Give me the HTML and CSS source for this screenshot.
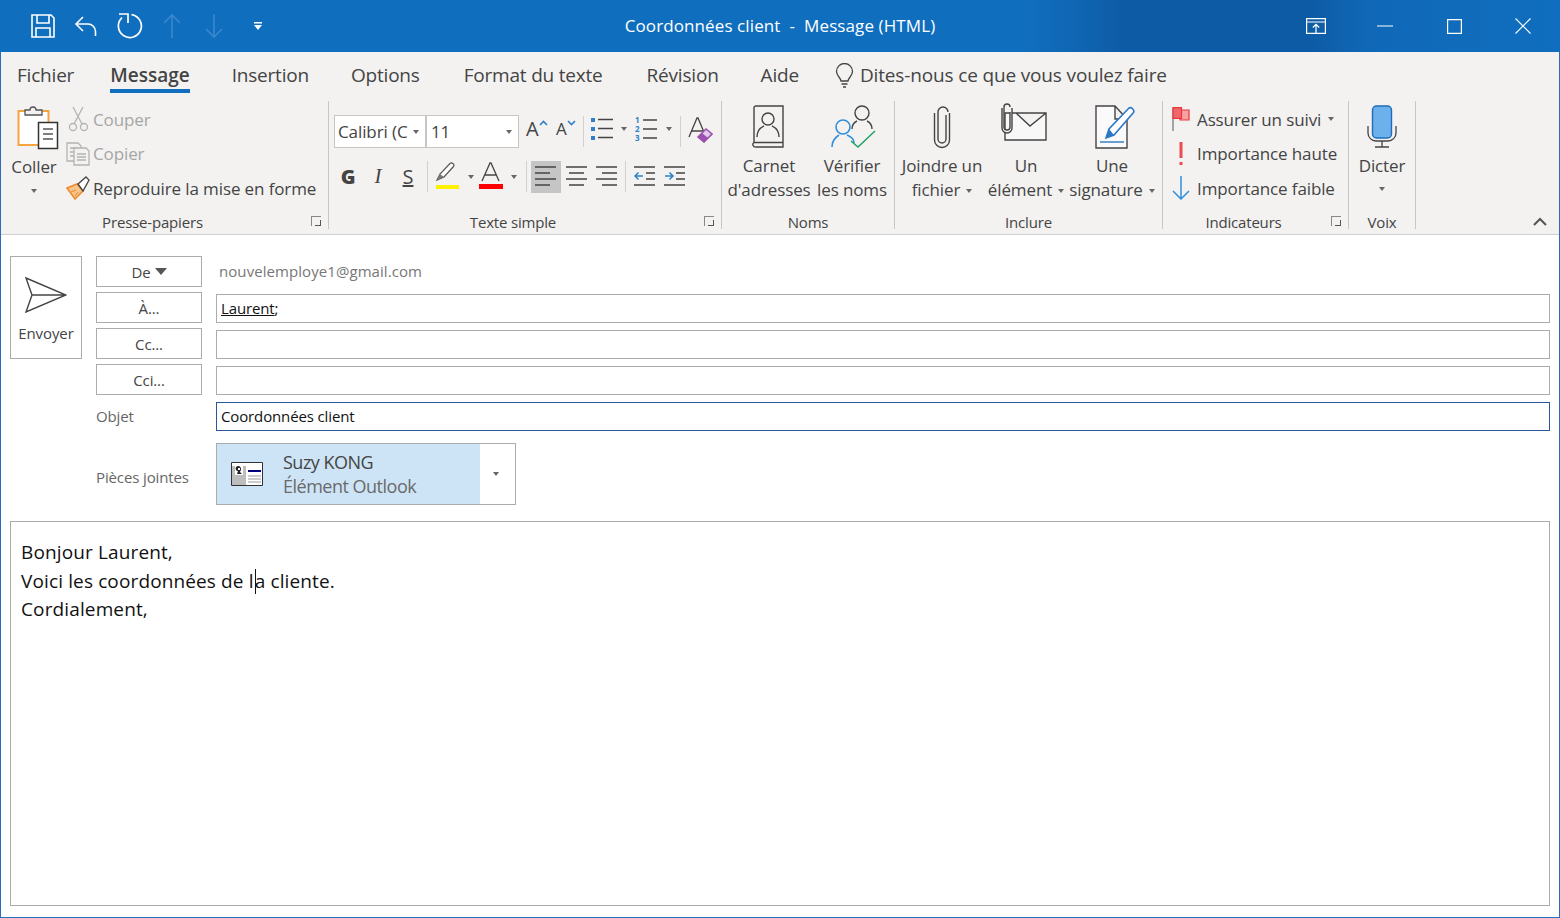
FILE: index.html
```html
<!DOCTYPE html>
<html lang="fr">
  <head>
    <meta charset="UTF-8" />
    <title>Coordonnées client - Message (HTML)</title>
    <link rel="stylesheet" href="styles.css">
  </head>
  <body>
    <div class="window">
      <header class="titlebar">
        <div class="qat">
          <svg class="qat-save" width="26" height="26" viewBox="0 0 26 26" fill="none" stroke="#fff" stroke-width="1.6"><path d="M2 2h19l3 3v19H2z"/><path d="M7 2v8h12V2M6 24v-9h14v9"/></svg>
          <svg class="qat-undo" width="24" height="24" viewBox="0 0 24 24" fill="none" stroke="#fff" stroke-width="1.6"><path d="M9 3 2 10l7 7"/><path d="M2 10h12a7.500 7.500 0 0 1 7.500 7.500V22"/></svg>
          <svg class="qat-redo" width="26" height="26" viewBox="0 0 26 26" fill="none" stroke="#fff" stroke-width="1.7"><path d="M14.500 1.600a11.500 11.500 0 1 1-9.500 3"/><path d="M2 1h9v9"/></svg>
          <svg class="qat-up" width="18" height="26" viewBox="0 0 18 26" fill="none" stroke="#3a87cf" stroke-width="1.6"><path d="M9 25V2M1 10l8-8 8 8"/></svg>
          <svg class="qat-down" width="18" height="26" viewBox="0 0 18 26" fill="none" stroke="#3a87cf" stroke-width="1.6"><path d="M9 1v23M1 16l8 8 8-8"/></svg>
          <svg class="qat-more" width="10" height="9" viewBox="0 0 10 9" fill="#fff"><path d="M1 0h8v1.500H1zM1 3h8L5 8z"/></svg>
        </div>
        <div class="window-title">Coordonnées client&nbsp; -&nbsp; Message (HTML)</div>
        <div class="win-controls">
          <svg class="win-display" width="20" height="16" viewBox="0 0 20 16" fill="none" stroke="#fff" stroke-width="1.200"><path d="M.6.6h18.800v14.800H.6zM.6 4h18.800M10 15V6.500M6.800 9.500 10 6.300l3.200 3.200"/></svg>
          <svg class="win-min" width="16" height="2" viewBox="0 0 16 2" stroke="#fff"><path d="M0 1h16"/></svg>
          <svg class="win-max" width="15" height="15" viewBox="0 0 15 15" fill="none" stroke="#fff" stroke-width="1.200"><path d="M.6.6h13.800v13.800H.6z"/></svg>
          <svg class="win-close" width="16" height="16" viewBox="0 0 16 16" stroke="#fff" stroke-width="1.100"><path d="m.5.500 15 15M15.500.500l-15 15"/></svg>
        </div>
      </header>

      <nav class="tabs">
        <span class="tab">Fichier</span>
        <span class="tab tab-active">Message</span>
        <span class="tab">Insertion</span>
        <span class="tab">Options</span>
        <span class="tab tab-format">Format du texte</span>
        <span class="tab tab-review">Révision</span>
        <span class="tab">Aide</span>
        <span class="tab tab-search">
          <svg width="19" height="25" viewBox="0 0 19 25" fill="none" stroke="#444" stroke-width="1.300"><path d="M6 18c0-3-4.500-5-4.500-9.500a8 8 0 0 1 16 0C17.500 13 13 15 13 18z"/><path d="M6.500 21h6M8 24h3"/></svg>
          Dites-nous ce que vous voulez faire
        </span>
      </nav>

      <section class="ribbon">
        <div class="group group-clip">
          <div class="group-body">
            <div class="paste">
              <svg width="42" height="46" viewBox="0 0 42 46" fill="none">
                <path d="M1.500 7h30v34h-30z" fill="#fff" stroke="#f6a440" stroke-width="2"/>
                <path d="M8 11V6h5a3 3 0 0 1 6 0h6v5z" fill="#f3f2f1" stroke="#555" stroke-width="1.300"/>
                <path d="M21.500 18.500h19v26h-19z" fill="#fff" stroke="#333" stroke-width="1.500"/>
                <path d="M26 25h10M26 30h10M26 35h10" stroke="#555" stroke-width="1.300"/>
              </svg>
              <span class="paste-label">Coller</span>
              <i class="caret"></i>
            </div>
            <div class="small-col">
              <div class="small-row is-disabled">
                <svg width="24" height="26" viewBox="0 0 24 26" fill="none" stroke="#b3b3b3" stroke-width="1.300"><path d="M7 1l9 17M17 1 8 18"/><circle cx="7" cy="21" r="3.500"/><circle cx="18" cy="21" r="3.500"/></svg>
                Couper
              </div>
              <div class="small-row is-disabled">
                <svg width="24" height="24" viewBox="0 0 24 24" fill="none" stroke="#b3b3b3" stroke-width="1.300"><path d="M1 1h11l3 3v15H1zM4 6h7M4 10h7M4 14h7"/><path d="M8 6h12l3 3v14H8z" fill="#f3f2f1"/><path d="M11 12h9M11 15h9M11 18h9"/></svg>
                Copier
              </div>
              <div class="small-row">
                <svg width="24" height="24" viewBox="0 0 24 24" fill="none"><path d="M1 12 11 8l6 7-8 8z" fill="#f9c48a" stroke="#ee8a2c" stroke-width="1.500"/><path d="M5 16l5-2M9 20l3-4" stroke="#ee8a2c"/><path d="m12 8 8-7 3 3-6 11z" fill="#fff" stroke="#444" stroke-width="1.300"/></svg>
                Reproduire la mise en forme
              </div>
            </div>
          </div>
          <div class="group-label has-launcher">Presse-papiers<i class="launcher"></i></div>
        </div>

        <div class="group group-font">
          <div class="group-body font-body">
            <div class="font-row">
              <div class="combo combo-font">Calibri (C<i class="caret"></i></div>
              <div class="combo combo-size">11<i class="caret"></i></div>
              <span class="grow-icon">A<svg width="9" height="6" viewBox="0 0 9 6" fill="none" stroke="#2f7fc9" stroke-width="1.600"><path d="m1 5 3.500-3.500L8 5"/></svg></span>
              <span class="shrink-icon">A<svg width="9" height="6" viewBox="0 0 9 6" fill="none" stroke="#2f7fc9" stroke-width="1.600"><path d="m1 1 3.500 3.500L8 1"/></svg></span>
              <i class="vsep vsep-a"></i>
              <svg class="ic-bullets" width="24" height="24" viewBox="0 0 24 24"><path d="M1 1h4v4H1zM1 10h4v4H1zM1 19h4v4H1z" fill="#2f7fc9"/><path d="M8 2.500h15M8 11.500h15M8 20.500h15" stroke="#444" stroke-width="1.300"/></svg>
              <i class="caret caret-list"></i>
              <svg class="ic-numbers" width="24" height="30" viewBox="0 0 24 30"><text x="1" y="9" class="num-text">1</text><text x="1" y="18" class="num-text">2</text><text x="1" y="27" class="num-text">3</text><path d="M9 6h14M9 15h14M9 24h14" stroke="#444" stroke-width="1.300"/></svg>
              <i class="caret caret-list"></i>
              <i class="vsep vsep-b"></i>
              <svg class="ic-clear" width="25" height="26" viewBox="0 0 25 26" fill="none"><path d="M1 20 9 1h1l8 19M4 14h11" stroke="#444" stroke-width="1.300"/><path d="m10 20 8-8 6 5-8 8z" fill="#e4c8ec" stroke="#9b4fb0" stroke-width="1.600"/><path d="m10 20 4-4 6 5-4 4z" fill="#9b4fb0"/></svg>
            </div>
            <div class="font-row format-row">
              <b class="fmt fmt-g">G</b>
              <i class="fmt fmt-i">I</i>
              <span class="fmt fmt-s">S</span>
              <i class="vsep vsep-c"></i>
              <svg class="ic-marker" width="25" height="27" viewBox="0 0 25 27" fill="none"><path d="m2 18 3-6L15 1.500c2-1.500 5 1 3.500 3L9 15z" fill="#fff" stroke="#555" stroke-width="1.200"/><path d="m2 18 3-6 4 3z" fill="#777"/><path d="M1 23h23v4H1z" fill="#fdf000"/></svg>
              <i class="caret caret-fmt"></i>
              <svg class="ic-color" width="25" height="27" viewBox="0 0 25 27" fill="none"><path d="M4 19 12 1h1l8 18M7 13h11" stroke="#444" stroke-width="1.300"/><path d="M1 22h24v5H1z" fill="#f00"/></svg>
              <i class="caret caret-fmt"></i>
              <i class="vsep vsep-d"></i>
              <span class="align-btn is-on"><svg width="22" height="20" viewBox="0 0 22 20" stroke="#444" stroke-width="1.300"><path d="M0 1h21M0 7h15M0 13h21M0 19h15"/></svg></span>
              <span class="align-btn align-center"><svg width="22" height="20" viewBox="0 0 22 20" stroke="#444" stroke-width="1.300"><path d="M0 1h21M3 7h15M0 13h21M3 19h15"/></svg></span>
              <span class="align-btn"><svg width="22" height="20" viewBox="0 0 22 20" stroke="#444" stroke-width="1.300"><path d="M0 1h21M6 7h15M0 13h21M6 19h15"/></svg></span>
              <i class="vsep vsep-e"></i>
              <svg class="ic-indent" width="22" height="20" viewBox="0 0 22 20" fill="none" stroke="#444" stroke-width="1.300"><path d="M0 1h21M12 7h9M12 13h9M0 19h21"/><path d="M9 10H1M4.500 6.500 1 10l3.500 3.500" stroke="#2f7fc9" stroke-width="1.500"/></svg>
              <svg class="ic-indent" width="22" height="20" viewBox="0 0 22 20" fill="none" stroke="#444" stroke-width="1.300"><path d="M0 1h21M12 7h9M12 13h9M0 19h21"/><path d="M1 10h8M5.500 6.500 9 10l-3.500 3.500" stroke="#2f7fc9" stroke-width="1.500"/></svg>
            </div>
          </div>
          <div class="group-label has-launcher">Texte simple<i class="launcher"></i></div>
        </div>

        <div class="group group-names">
          <div class="group-body">
            <div class="big-btn btn-book">
              <svg width="33" height="44" viewBox="0 0 33 44" fill="none" stroke="#444" stroke-width="1.400"><path d="M3 38V3a2 2 0 0 1 2-2h27v41H5a2.500 2.500 0 0 1-2-4.500h29"/><circle cx="17" cy="14" r="6"/><path d="M6 32c0-8 5-10 7-11M28 32c0-8-5-10-7-11"/></svg>
              <span>Carnet<br>d'adresses</span>
            </div>
            <div class="big-btn btn-check">
              <svg width="46" height="44" viewBox="0 0 46 44" fill="none"><circle cx="31" cy="8" r="7" stroke="#444" stroke-width="1.400"/><path d="M21 24c0-5 3-7 5-8M41 24c0-5-3-7-5-8" stroke="#444" stroke-width="1.400"/><circle cx="12" cy="22" r="7" fill="#f3f2f1" stroke="#2f8fdc" stroke-width="1.600"/><path d="M1 42c0-7 4-10 7-12M23 38c0-4-2-6-7-8" stroke="#2f8fdc" stroke-width="1.600"/><path d="m20 36 7 6 17-16" stroke="#21a366" stroke-width="1.500"/></svg>
              <span>Vérifier<br>les noms</span>
            </div>
          </div>
          <div class="group-label">Noms</div>
        </div>

        <div class="group group-include">
          <div class="group-body">
            <div class="big-btn btn-file">
              <svg width="18" height="44" viewBox="0 0 18 44" fill="none" stroke="#444" stroke-width="1.400"><path d="M13 10v24a4 4 0 0 1-8 0V7a5 5 0 0 1 10 0M1.500 8v27a7.500 7.500 0 0 0 15 0V8"/></svg>
              <span>Joindre un<br>fichier<i class="caret"></i></span>
            </div>
            <div class="big-btn btn-item">
              <svg width="46" height="44" viewBox="0 0 46 44" fill="none" stroke="#444" stroke-width="1.400"><path d="M4 10h41v27H4zM15 10l14 13 16-13" fill="#f8f8f8"/><path d="M9 9v15a3 3 0 0 1-6 0V4a3 3 0 0 1 6 0M1 5v20a5 5 0 0 0 10 0V5" fill="#f3f2f1"/></svg>
              <span>Un<br>élément<i class="caret"></i></span>
            </div>
            <div class="big-btn btn-sign">
              <svg width="42" height="44" viewBox="0 0 42 44" fill="none"><path d="M1 1h19l12 13v29H1zM20 1v13h12" fill="#fafafa" stroke="#444" stroke-width="1.400"/><path d="m11 33 3-9L34 3c2-1.500 6 2 4.500 4.500L19 30z" fill="#fff" stroke="#2b78c5" stroke-width="1.600"/><path d="m11 33 3-9 5 6z" fill="#2b78c5"/><path d="M5 37h24" stroke="#2b78c5" stroke-width="1.400"/></svg>
              <span>Une<br>signature<i class="caret"></i></span>
            </div>
          </div>
          <div class="group-label">Inclure</div>
        </div>

        <div class="group group-flags">
          <div class="small-col flags-col">
            <div class="small-row">
              <svg width="18" height="24" viewBox="0 0 18 24"><path d="M1 1v23" stroke="#555"/><path d="M8 3h9v10H8z" fill="#f8a1a1" stroke="#e8383e" stroke-width="1.200"/><path d="M1 .6h8.500v10.800H1z" fill="#f0666c" stroke="#e8383e" stroke-width="1.200"/></svg>
              Assurer un suivi<i class="caret"></i>
            </div>
            <div class="small-row">
              <svg width="18" height="24" viewBox="0 0 18 24"><path d="M7.500 0h3v16h-3zM7.500 20h3v3h-3z" fill="#ee4b50"/></svg>
              Importance haute
            </div>
            <div class="small-row">
              <svg width="18" height="24" viewBox="0 0 18 24" fill="none" stroke="#2f8fdc" stroke-width="1.500"><path d="M9 0v23M1 15l8 8 8-8"/></svg>
              Importance faible
            </div>
          </div>
          <div class="group-label has-launcher">Indicateurs<i class="launcher"></i></div>
        </div>

        <div class="group group-voice">
          <div class="group-body">
            <div class="big-btn btn-mic">
              <svg width="30" height="44" viewBox="0 0 30 44" fill="none"><rect x="5.500" y="1" width="19" height="32" rx="4" fill="#6cb0ec" stroke="#1f6cb8" stroke-width="1.400"/><path d="M1 21v7a8 8 0 0 0 8 8h12a8 8 0 0 0 8-8v-7M15 36v6M8 42h14" stroke="#444" stroke-width="1.300"/></svg>
              <span>Dicter</span>
              <i class="caret caret-block"></i>
            </div>
          </div>
          <div class="group-label">Voix</div>
        </div>

        <svg class="collapse" width="14" height="9" viewBox="0 0 14 9" fill="none" stroke="#555" stroke-width="2"><path d="m1 8 6-6 6 6"/></svg>
      </section>

      <main class="compose">
        <div class="headers">
          <button class="send-btn">
            <svg width="42" height="36" viewBox="0 0 42 36" fill="none" stroke="#444" stroke-width="1.400"><path d="M1 1 41 18 1 35l6-17zM7 18h34"/></svg>
            Envoyer
          </button>
          <div class="fields">
            <span class="addr-btn">De <i class="de-arrow"></i></span>
            <span class="from-text">nouvelemploye1@gmail.com</span>
            <span class="addr-btn">À...</span>
            <div class="input"><u>Laurent</u>;</div>
            <span class="addr-btn">Cc...</span>
            <div class="input"></div>
            <span class="addr-btn">Cci...</span>
            <div class="input"></div>
            <span class="field-label">Objet</span>
            <div class="input input-focus">Coordonnées client</div>
            <span class="field-label label-attach">Pièces jointes</span>
            <div class="attachment">
              <div class="attach-main">
                <svg width="32" height="24" viewBox="0 0 32 24"><path d="M.5.500h31v23H.5z" fill="#fff" stroke="#333"/><path d="M1 4h14v19H1z" fill="#bdbdbd"/><path d="M4 3h8v10H4z" fill="#fff"/><path d="M5 5c2-2 5-1 5 2 0 2-1 2-1 3l2 2H6l1-3C5 9 4 7 5 5z" fill="#222"/><path d="M7 6h2v2H7z" fill="#fff"/><path d="M17 9h13" stroke="#00007f" stroke-width="2"/><path d="M17 14h13M17 17h13M17 20h13" stroke="#999"/></svg>
                <div class="attach-text">
                  <span class="attach-name">Suzy KONG</span>
                  <span class="attach-type">Élément Outlook</span>
                </div>
              </div>
              <div class="attach-menu"><i class="caret"></i></div>
            </div>
          </div>
        </div>
        <div class="editor">
          <p>Bonjour Laurent,</p>
          <p>Voici les coordonnées de l<span class="cursor"></span>a cliente.</p>
          <p>Cordialement,</p>
        </div>
      </main>
    </div>
  </body>
</html>
```

FILE: styles.css
```css
* {
  margin: 0;
  padding: 0;
  box-sizing: border-box;
}
:root {
  --blue: #106ebe;
  --ribbon: #f3f2f1;
  --sep: #c8c6c4;
  --text: #444;
  --border: #ababab;
}
html,
body {
  height: 100%;
  overflow: hidden;
}
body {
  font-family: "Open Sans", "Noto Sans", sans-serif;
  color: var(--text);
  background: #fff;
}
i {
  font-style: normal;
}
.window {
  height: 918px;
  display: flex;
  flex-direction: column;
  border: 1px solid #2b6cc0;
  border-top: 0;
}

/* title bar */
.titlebar {
  height: 52px;
  flex: none;
  margin: 0 -1px;
  display: grid;
  grid-template-columns: 1fr auto 1fr;
  align-items: center;
  color: #fff;
  background: linear-gradient(90deg, #106ebe 0, #106ebe 66%, #0f63ae 70%, #0e5ba5 72%, #0e5ba5 84%, #1069b8 88%, #106ebe 100%);
}
.qat {
  display: flex;
  align-items: center;
  padding-left: 30px;
}
.qat-undo {
  margin-left: 18px;
}
.qat-redo {
  margin-left: 19px;
}
.qat-up {
  margin-left: 20px;
}
.qat-down {
  margin-left: 24px;
}
.qat-more {
  margin-left: 30px;
}
.window-title {
  font-size: 17px;
  letter-spacing: 0.1px;
  margin-top: -2px;
}
.win-controls {
  display: flex;
  align-items: center;
  justify-content: flex-end;
  padding-right: 29px;
}
.win-min {
  margin-left: 51px;
}
.win-max {
  margin-left: 54px;
}
.win-close {
  margin-left: 53px;
}

/* tabs */
.tabs {
  height: 46px;
  flex: none;
  display: flex;
  align-items: center;
  gap: 42px;
  padding: 0 0 0 16px;
  background: var(--ribbon);
  font-size: 19px;
  letter-spacing: -0.2px;
}
.tab {
  position: relative;
  white-space: nowrap;
}
.tab-active {
  font-weight: 600;
  letter-spacing: 0;
  margin-left: -6px;
}
.tab-format {
  margin-left: 2px;
}
.tab-review {
  margin-left: 2px;
}
.tab-active::after {
  content: "";
  position: absolute;
  left: 0;
  right: 0;
  bottom: -5px;
  height: 4px;
  background: #106ebe;
}
.tab-search {
  display: flex;
  align-items: center;
  gap: 6px;
  margin-left: -6px;
  letter-spacing: -0.15px;
}

/* ribbon */
.ribbon {
  height: 137px;
  flex: none;
  display: flex;
  position: relative;
  padding: 3px 0 5px;
  background: var(--ribbon);
  border-bottom: 1px solid #d2d0ce;
  font-size: 17px;
  letter-spacing: -0.12px;
}
.group {
  display: flex;
  flex-direction: column;
  flex: none;
  border-right: 1px solid var(--sep);
}
.group-clip {
  width: 328px;
}
.group-font {
  width: 393px;
}
.group-names {
  width: 173px;
}
.group-include {
  width: 268px;
}
.group-flags {
  width: 186px;
}
.group-voice {
  width: 67px;
}
.group-body {
  flex: 1;
  display: flex;
  min-height: 0;
}
.group-label {
  position: relative;
  height: 22px;
  flex: none;
  text-align: center;
  font-size: 15px;
  line-height: 30px;
  letter-spacing: -0.18px;
}
.group-label.has-launcher {
  padding-right: 24px;
}
.launcher {
  position: absolute;
  right: 7px;
  top: 9px;
  width: 10px;
  height: 10px;
  border-left: 1px solid #888;
  border-top: 1px solid #888;
}
.launcher::after {
  content: "";
  position: absolute;
  right: 0;
  bottom: 0;
  width: 5px;
  height: 5px;
  border-right: 1px solid #555;
  border-bottom: 1px solid #555;
}
.caret {
  display: inline-block;
  width: 0;
  height: 0;
  margin-left: 6px;
  vertical-align: middle;
  border-top: 4px solid #666;
  border-left: 3.500px solid transparent;
  border-right: 3.500px solid transparent;
}

/* clipboard */
.paste {
  width: 50px;
  margin-left: 8px;
  display: flex;
  flex-direction: column;
  align-items: center;
  padding-top: 3px;
}
.paste svg {
  margin-left: 7px;
}
.paste-label {
  line-height: 33px;
}
.paste .caret {
  margin: 6px 0 0;
}
.small-col {
  display: flex;
  flex-direction: column;
  margin-left: 7px;
  padding-top: 1px;
}
.small-row {
  height: 34.500px;
  display: flex;
  align-items: center;
  gap: 3px;
  white-space: nowrap;
}
.small-row.is-disabled {
  color: #a6a6a6;
}

/* font group */
.font-body {
  flex-direction: column;
  padding: 14px 0 0 5px;
  gap: 12px;
}
.font-row {
  display: flex;
  align-items: center;
  height: 33px;
}
.combo {
  height: 33px;
  background: #fff;
  border: 1px solid #c8c6c4;
  display: flex;
  align-items: center;
  padding-left: 3px;
  letter-spacing: -0.1px;
}
.combo .caret {
  margin-left: auto;
  margin-right: 6px;
}
.combo-font {
  width: 92px;
}
.combo-size {
  width: 93px;
  padding-left: 4px;
}
.grow-icon,
.shrink-icon {
  display: inline-flex;
  align-items: flex-start;
  margin-bottom: 5px;
  font-size: 20px;
  line-height: 24px;
}
.grow-icon {
  margin-left: 7px;
  width: 30px;
}
.shrink-icon {
  width: 27px;
  font-size: 17px;
}
.grow-icon svg,
.shrink-icon svg {
  margin-top: 3px;
}
.vsep {
  display: block;
  width: 1px;
  height: 31px;
  background: #d2d0ce;
  flex: none;
}
.ic-bullets {
  margin-left: 6px;
  margin-bottom: 6px;
}
.caret-list {
  margin-left: 7px;
  margin-bottom: 5px;
}
.ic-numbers {
  margin-left: 7px;
  margin-bottom: 6px;
}
.ic-numbers + .caret {
  margin-left: 8px;
}
.num-text {
  font-size: 8px;
  font-weight: 700;
  fill: #2f7fc9;
  letter-spacing: 0;
}
.vsep-b {
  margin-left: 8px;
}
.ic-clear {
  margin-left: 7px;
  margin-bottom: 4px;
}
.format-row svg {
  margin-bottom: 2px;
}
.fmt {
  width: 30px;
  text-align: center;
  font-size: 20px;
}
.fmt-g {
  font-weight: 800;
  margin-left: -1px;
}
.fmt-i {
  font-family: "Liberation Serif", serif;
  font-style: italic;
  font-size: 21px;
}
.fmt-s {
  text-decoration: underline;
}
.vsep-c {
  margin-left: 4px;
}
.ic-marker {
  margin-left: 7px;
}
.caret-fmt {
  margin-left: 8px;
}
.ic-color {
  margin-left: 4px;
}
.vsep-d {
  margin-left: 9px;
}
.align-btn {
  width: 30px;
  height: 32px;
  display: flex;
  align-items: center;
  justify-content: center;
}
.align-btn.is-on {
  background: #c5c5c5;
  margin-left: 4px;
}
.align-center {
  margin-left: 1px;
}
.vsep-e {
  margin-left: 3px;
}
.ic-indent {
  margin-left: 8px;
}

/* big buttons */
.big-btn {
  display: flex;
  flex-direction: column;
  align-items: center;
  text-align: center;
  padding-top: 4px;
  white-space: nowrap;
  line-height: 24px;
}
.big-btn svg {
  height: 44px;
  margin-bottom: 5px;
  flex: none;
}
.btn-book {
  width: 90px;
  margin-left: 2px;
}
.btn-book svg {
  margin-right: 4px;
}
.btn-check {
  width: 76px;
}
.btn-check svg {
  margin-left: 3px;
}
.btn-file {
  width: 94px;
}
.btn-item {
  width: 74px;
}
.btn-item svg {
  margin: -2px 4px 7px 0;
}
.btn-sign {
  width: 98px;
}
.btn-sign svg {
  margin-left: 8px;
}
.btn-mic {
  width: 66px;
}
.caret-block {
  margin: 9px 0 0;
}
.flags-col {
  flex: 1;
  margin-left: 9px;
}
.flags-col .small-row {
  gap: 7px;
}
.flags-col .caret {
  margin-left: 0;
}
.collapse {
  position: absolute;
  right: 12px;
  bottom: 8px;
}

/* compose form */
.compose {
  flex: 1;
  min-height: 0;
  display: flex;
  flex-direction: column;
  padding: 21px 9px 11px;
}
.headers {
  display: flex;
  align-items: flex-start;
  gap: 14px;
}
.send-btn {
  width: 72px;
  height: 103px;
  display: flex;
  flex-direction: column;
  align-items: center;
  gap: 10px;
  padding-top: 20px;
  background: #fff;
  border: 1px solid var(--border);
  font: 15px "Open Sans", sans-serif;
  letter-spacing: -0.1px;
  color: var(--text);
}
.fields {
  flex: 1;
  display: grid;
  grid-template-columns: 106px 1fr;
  grid-template-rows: 31px 31px 31px 31px 31px 69px;
  column-gap: 14px;
  row-gap: 5px;
  font-size: 15px;
  letter-spacing: -0.13px;
}
.addr-btn {
  display: flex;
  align-items: center;
  justify-content: center;
  gap: 4px;
  border: 1px solid var(--border);
}
.de-arrow {
  width: 0;
  height: 0;
  border-top: 7px solid #555;
  border-left: 6.500px solid transparent;
  border-right: 6.500px solid transparent;
}
.from-text {
  align-self: center;
  margin-top: -2px;
  padding-left: 3px;
  color: #777;
  letter-spacing: 0.07px;
}
.input {
  height: 29px;
  align-self: end;
  padding-left: 4px;
  line-height: 27px;
  border: 1px solid var(--border);
  color: #111;
}
.input-focus {
  border-color: #2b579a;
}
.field-label {
  align-self: center;
  color: #666;
}
.label-attach {
  margin-top: 12px;
}
.attachment {
  width: 300px;
  height: 62px;
  margin-top: 7px;
  display: flex;
  border: 1px solid var(--border);
}
.attach-main {
  width: 263px;
  display: flex;
  align-items: center;
  gap: 20px;
  padding-left: 14px;
  background: #cde4f6;
}
.attach-text {
  display: flex;
  flex-direction: column;
  font-size: 18px;
  line-height: 24px;
  letter-spacing: -0.5px;
}
.attach-name {
  color: #444;
}
.attach-type {
  color: #6a6a6a;
}
.attach-menu {
  flex: 1;
  display: flex;
  align-items: center;
  justify-content: center;
  padding-right: 3px;
}
.attach-menu .caret {
  margin: 0;
}
.editor {
  flex: 1;
  margin-top: 16px;
  padding: 16px 10px;
  border: 1px solid var(--border);
  font-size: 19px;
  line-height: 28.500px;
  letter-spacing: 0.13px;
  color: #111;
}
.cursor {
  display: inline-block;
  width: 1px;
  height: 25px;
  margin: 0 -1px 0 1px;
  vertical-align: -6px;
  background: #111;
}
```
